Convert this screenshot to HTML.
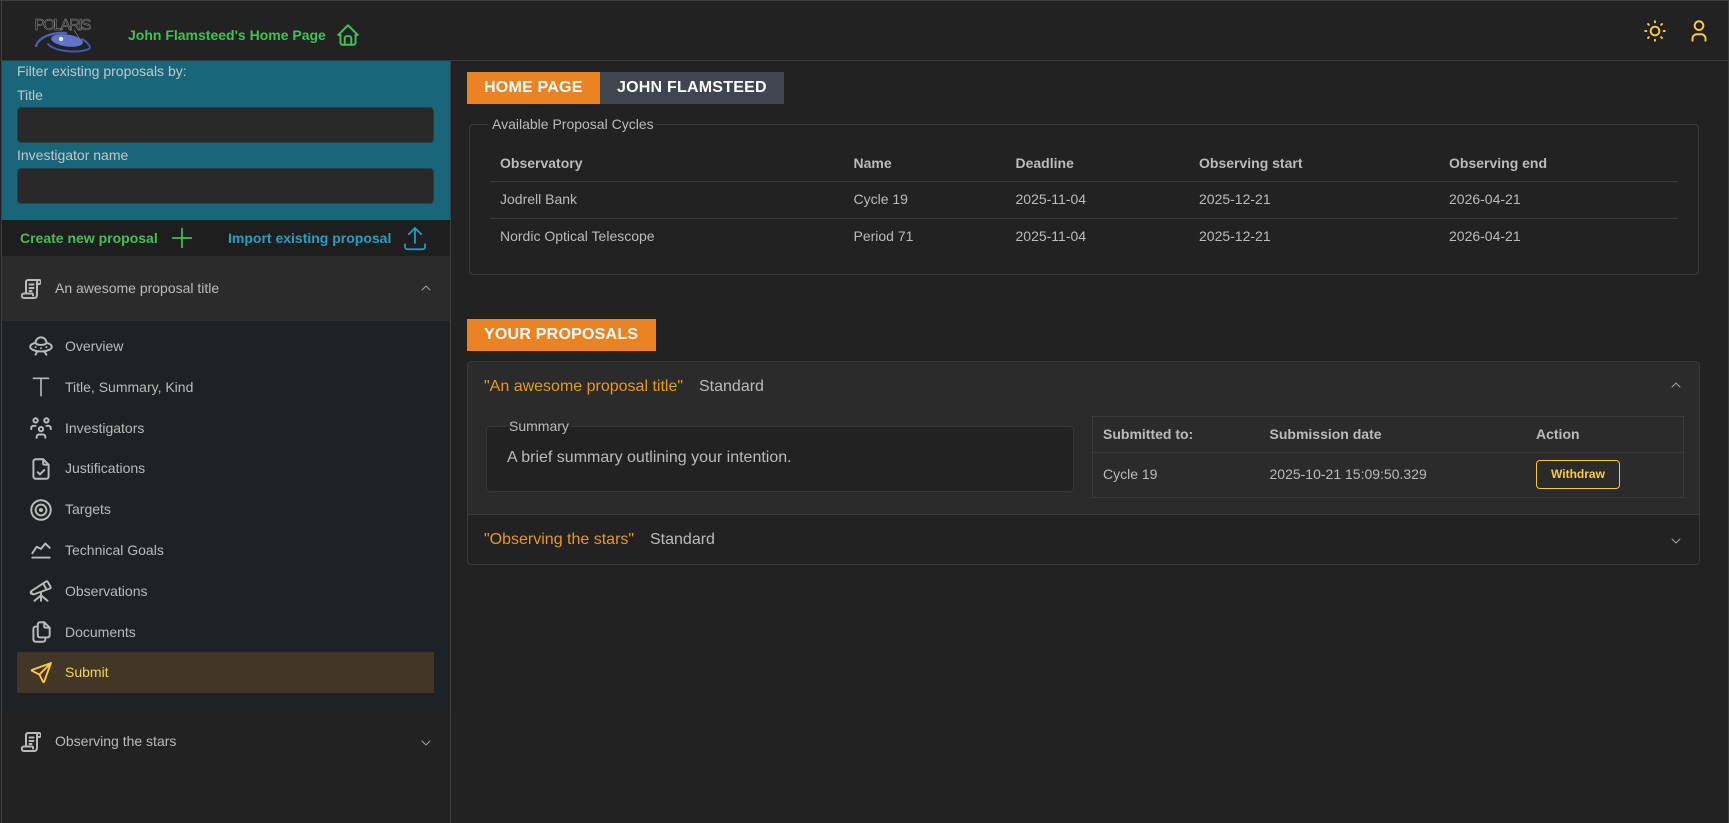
<!DOCTYPE html>
<html lang="en">
<head>
<meta charset="utf-8">
<title>Polaris</title>
<style>
*{box-sizing:border-box}
html,body{margin:0;padding:0;width:1729px;height:823px;overflow:hidden;background:#222;font-family:"Liberation Sans",Arial,sans-serif;color:#bbb}
.a{position:absolute}
.t{position:absolute;white-space:nowrap;line-height:20px;font-size:14px;color:#bbb}
.b{font-weight:700}
svg.i{position:absolute;fill:none;stroke:currentColor;stroke-width:1.8;stroke-linecap:round;stroke-linejoin:round}
svg.c{stroke-width:.9;color:#a8a8a8}
.tab{position:absolute;height:32px;color:#fff;font-weight:700;font-size:16px;line-height:32px;letter-spacing:.22px;white-space:nowrap;padding-left:17px}
.ln{position:absolute;height:1px;background:#3a3a3a}
.fs{position:absolute;border:1px solid #383838;border-radius:4px}
.inp{position:absolute;left:17px;width:417px;height:36px;background:#292929;border:1px solid #24424c;border-radius:4px}
</style>
</head>
<body>
<div class="a" style="left:0;top:0;width:1729px;height:1px;background:#3e3e3e"></div>
<div class="a" style="left:1px;top:0;width:1px;height:823px;background:#3e3e3e"></div>
<div class="a" style="left:1728px;top:0;width:1px;height:823px;background:#3e3e3e"></div>
<div class="a" style="left:0;top:60px;width:1729px;height:1px;background:#3a3a3a"></div>
<div class="a" style="left:450px;top:61px;width:1px;height:762px;background:#3e3e3e"></div>

<!-- logo -->
<svg class="a" style="left:30px;top:10px" width="70" height="48" viewBox="0 0 70 48">
<text x="4.500" y="20" font-family="Liberation Sans,sans-serif" font-size="15.500" fill="none" stroke="#8e8e8e" stroke-width=".5" textLength="57" lengthAdjust="spacing">POLARIS</text>
<path d="M44 20l7 11" stroke="#777" stroke-width=".7" fill="none"/>
<ellipse cx="37" cy="30.500" rx="16" ry="6" fill="#5f74c8" transform="rotate(8 37 30.500)"/>
<path d="M6 36C9 27 22 22 36 23" fill="none" stroke="#4f63b4" stroke-width="2.200" stroke-linecap="round"/>
<path d="M18 34C24 41 46 44 59 39 62 37 57 32 52 29" fill="none" stroke="#4558a6" stroke-width="2" stroke-linecap="round"/>
<circle cx="31" cy="29" r="2.200" fill="#e6ebff"/>
</svg>
<div class="t b" style="left:128px;top:25px;color:#40c057">John Flamsteed's Home Page</div>
<svg class="i" style="left:335px;top:22px;color:#40c057" width="26" height="26" viewBox="0 0 24 24"><path d="M5 12l-2 0l9 -9l9 9l-2 0"/><path d="M5 12v7a2 2 0 0 0 2 2h10a2 2 0 0 0 2 -2v-7"/><path d="M9 21v-6a2 2 0 0 1 2 -2h2a2 2 0 0 1 2 2v6"/></svg>
<svg class="i" style="left:1642px;top:18px;color:#fcc93f" width="26" height="26" viewBox="0 0 24 24"><path d="M12 12m-4 0a4 4 0 1 0 8 0a4 4 0 1 0 -8 0"/><path d="M3 12h1m8 -9v1m8 8h1m-9 8v1m-6.400 -15.400l.7 .7m12.100 -.7l-.7 .7m0 11.400l.7 .7m-12.100 -.7l-.7 .7"/></svg>
<svg class="i" style="left:1686px;top:18px;color:#fcc93f" width="26" height="26" viewBox="0 0 24 24"><path d="M8 7a4 4 0 1 0 8 0a4 4 0 0 0 -8 0"/><path d="M6 21v-2a4 4 0 0 1 4 -4h4a4 4 0 0 1 4 4v2"/></svg>

<!-- sidebar -->
<div class="a" style="left:2px;top:61px;width:448px;height:159px;background:#19667a"></div>
<div class="t" style="left:17px;top:61px;color:#c0c8cc">Filter existing proposals by:</div>
<div class="t" style="left:17px;top:85px;color:#c0c8cc">Title</div>
<div class="inp" style="top:107px"></div>
<div class="t" style="left:17px;top:145px;color:#c0c8cc">Investigator name</div>
<div class="inp" style="top:168px"></div>
<div class="a" style="left:2px;top:220px;width:448px;height:36px;background:#1e1e1e"></div>
<div class="t b" style="left:20px;top:228px;color:#40c057">Create new proposal</div>
<svg class="i" style="left:166px;top:222px;color:#40c057;stroke-width:1.300" width="32" height="32" viewBox="0 0 24 24"><path d="M12 5l0 14"/><path d="M5 12l14 0"/></svg>
<div class="t b" style="left:228px;top:228px;color:#22a0c4">Import existing proposal</div>
<svg class="i" style="left:400px;top:223px;color:#22a0c4;stroke-width:1.400" width="30" height="30" viewBox="0 0 24 24"><path d="M4 17v2a2 2 0 0 0 2 2h12a2 2 0 0 0 2 -2v-2"/><path d="M7 9l5 -5l5 5"/><path d="M12 4l0 12"/></svg>

<div class="a" style="left:2px;top:256px;width:448px;height:65px;background:#2b2b2b"></div>
<svg class="i" style="left:21px;top:279px;stroke-width:2" width="20" height="20" viewBox="0 0 20 20"><path d="M5 14V3a2 2 0 0 1 2-2h11"/><path d="M16 3a2 2 0 0 1 2-2 2 2 0 0 1 2 2c0 1-.8 2-2 2h-2"/><path d="M16 3v13c0 1.700-1 3-3 3H3a2.200 2.200 0 0 1 0-4.500h8c.6 0 1 .5 1 1v1"/><path d="M8.500 5.500h4M8.500 9h4M8.500 12h2"/></svg>
<div class="t" style="left:55px;top:278px">An awesome proposal title</div>
<svg class="i c" style="left:420px;top:282px" width="12" height="12" viewBox="0 0 12 12"><path d="M2 8l4-4 4 4"/></svg>

<div class="a" style="left:2px;top:321px;width:448px;height:388px;background:#1d2226"></div>
<div class="a" style="left:17px;top:652px;width:417px;height:41px;background:#423626"></div>

<svg class="i" style="left:28px;top:333px" width="26" height="26" viewBox="0 0 24 24"><path d="M16.950 9.010c3.020 .739 5.050 2.123 5.050 3.714c0 2.367 -4.480 4.276 -10 4.276s-10 -1.909 -10 -4.276c0 -1.590 2.040 -2.985 5.070 -3.724"/><path d="M7 9c0 1.105 2.239 2 5 2s5 -.895 5 -2v-.035c0 -2.742 -2.239 -4.965 -5 -4.965s-5 2.223 -5 4.965v.035"/><path d="M15 17l2 3"/><path d="M8.500 17l-1.500 3"/><path d="M12 14h.01"/><path d="M7 13h.01"/><path d="M17 13h.01"/></svg>
<div class="t" style="left:65px;top:336px">Overview</div>
<svg class="i" style="left:28px;top:374px;stroke-width:1.500" width="26" height="26" viewBox="0 0 24 24"><path d="M5 4l14 0"/><path d="M12 4l0 16"/></svg>
<div class="t" style="left:65px;top:377px">Title, Summary, Kind</div>
<svg class="i" style="left:28px;top:415px" width="26" height="26" viewBox="0 0 24 24"><path d="M10 13a2 2 0 1 0 4 0a2 2 0 0 0 -4 0"/><path d="M8 21v-1a2 2 0 0 1 2 -2h4a2 2 0 0 1 2 2v1"/><path d="M15 5a2 2 0 1 0 4 0a2 2 0 0 0 -4 0"/><path d="M17 10h2a2 2 0 0 1 2 2v1"/><path d="M5 5a2 2 0 1 0 4 0a2 2 0 0 0 -4 0"/><path d="M3 13v-1a2 2 0 0 1 2 -2h2"/></svg>
<div class="t" style="left:65px;top:418px">Investigators</div>
<svg class="i" style="left:28px;top:456px" width="26" height="26" viewBox="0 0 24 24"><path d="M14 3v4a1 1 0 0 0 1 1h4"/><path d="M17 21h-10a2 2 0 0 1 -2 -2v-14a2 2 0 0 1 2 -2h7l5 5v11a2 2 0 0 1 -2 2z"/><path d="M9 15l2 2l4 -4"/></svg>
<div class="t" style="left:65px;top:458px">Justifications</div>
<svg class="i" style="left:28px;top:497px" width="26" height="26" viewBox="0 0 24 24"><circle cx="12" cy="12" r="1"/><circle cx="12" cy="12" r="5"/><circle cx="12" cy="12" r="9"/></svg>
<div class="t" style="left:65px;top:499px">Targets</div>
<svg class="i" style="left:28px;top:537px" width="26" height="26" viewBox="0 0 24 24"><path d="M4 19l16 0"/><path d="M4 15l4 -6l4 2l4 -5l4 4"/></svg>
<div class="t" style="left:65px;top:540px">Technical Goals</div>
<svg class="i" style="left:28px;top:578px" width="26" height="26" viewBox="0 0 24 24"><path d="M6 21l6 -5l6 5"/><path d="M12 13v8"/><path d="M3.294 13.678l.166 .281c.52 .88 1.624 1.265 2.605 .91l14.242 -5.165a1.023 1.023 0 0 0 .565 -1.456l-2.620 -4.705a1.024 1.024 0 0 0 -1.462 -.394l-13.397 8.719c-.92 .6 -1.096 1.595 -.492 2.610z"/><path d="M14 5l3 5.500"/></svg>
<div class="t" style="left:65px;top:581px">Observations</div>
<svg class="i" style="left:28px;top:619px" width="26" height="26" viewBox="0 0 24 24"><path d="M15 3v4a1 1 0 0 0 1 1h4"/><path d="M18 17h-7a2 2 0 0 1 -2 -2v-10a2 2 0 0 1 2 -2h4l5 5v7a2 2 0 0 1 -2 2z"/><path d="M16 17v2a2 2 0 0 1 -2 2h-7a2 2 0 0 1 -2 -2v-10a2 2 0 0 1 2 -2h2"/></svg>
<div class="t" style="left:65px;top:622px">Documents</div>
<svg class="i" style="left:29px;top:660px;color:#fcc93f" width="25" height="25" viewBox="0 0 24 24"><path d="M10 14l11 -11"/><path d="M21 3l-6.500 18a.55 .55 0 0 1 -1 0l-3.500 -7l-7 -3.500a.55 .55 0 0 1 0 -1l18 -6.500"/></svg>
<div class="t" style="left:65px;top:662px;color:#fcd34d">Submit</div>

<svg class="i" style="left:21px;top:732px;stroke-width:2" width="20" height="20" viewBox="0 0 20 20"><path d="M5 14V3a2 2 0 0 1 2-2h11"/><path d="M16 3a2 2 0 0 1 2-2 2 2 0 0 1 2 2c0 1-.8 2-2 2h-2"/><path d="M16 3v13c0 1.700-1 3-3 3H3a2.200 2.200 0 0 1 0-4.500h8c.6 0 1 .5 1 1v1"/><path d="M8.500 5.500h4M8.500 9h4M8.500 12h2"/></svg>
<div class="t" style="left:55px;top:731px">Observing the stars</div>
<svg class="i c" style="left:420px;top:737px" width="12" height="12" viewBox="0 0 12 12"><path d="M2 4l4 4 4-4"/></svg>

<!-- main -->
<div class="a" style="left:467px;top:72px;width:133px;height:32px;background:#ec8323"></div>
<div class="tab" style="left:467px;top:72px">HOME PAGE</div>
<div class="a" style="left:600px;top:72px;width:184px;height:32px;background:#3f4650"></div>
<div class="tab" style="left:600px;top:72px">JOHN FLAMSTEED</div>

<div class="fs" style="left:469px;top:124px;width:1230px;height:151px"></div>
<div class="a" style="left:488px;top:120px;width:168px;height:10px;background:#222"></div>
<div class="t" style="left:492px;top:114px">Available Proposal Cycles</div>

<div class="t b" style="left:500px;top:153px">Observatory</div>
<div class="t b" style="left:853.500px;top:153px">Name</div>
<div class="t b" style="left:1015.500px;top:153px">Deadline</div>
<div class="t b" style="left:1199px;top:153px">Observing start</div>
<div class="t b" style="left:1449px;top:153px">Observing end</div>
<div class="ln" style="left:490px;top:181px;width:1188px"></div>
<div class="t" style="left:500px;top:189px">Jodrell Bank</div>
<div class="t" style="left:853.500px;top:189px">Cycle 19</div>
<div class="t" style="left:1015.500px;top:189px">2025-11-04</div>
<div class="t" style="left:1199px;top:189px">2025-12-21</div>
<div class="t" style="left:1449px;top:189px">2026-04-21</div>
<div class="ln" style="left:490px;top:218px;width:1188px"></div>
<div class="t" style="left:500px;top:226px">Nordic Optical Telescope</div>
<div class="t" style="left:853.500px;top:226px">Period 71</div>
<div class="t" style="left:1015.500px;top:226px">2025-11-04</div>
<div class="t" style="left:1199px;top:226px">2025-12-21</div>
<div class="t" style="left:1449px;top:226px">2026-04-21</div>

<div class="a" style="left:467px;top:319px;width:189px;height:32px;background:#ec8323"></div>
<div class="tab" style="left:467px;top:319px">YOUR PROPOSALS</div>

<div class="a" style="left:467px;top:361px;width:1233px;height:204px;border:1px solid #383838;border-radius:4px;background:#222;overflow:hidden">
  <div class="a" style="left:0;top:0;width:1231px;height:153px;background:#2b2b2b;border-bottom:1px solid #3a3a3a"></div>
</div>
<div class="t" style="left:484px;top:377px;font-size:16px;color:#e8981f">"An awesome proposal title"</div>
<div class="t" style="left:699px;top:377px;font-size:16px">Standard</div>
<svg class="i c" style="left:1670px;top:379px" width="12" height="12" viewBox="0 0 12 12"><path d="M2 8l4-4 4 4"/></svg>

<div class="fs" style="left:486px;top:426px;width:588px;height:66px;background:#222"></div>
<div class="a" style="left:506px;top:422px;width:66px;height:5px;background:#2b2b2b"></div>
<div class="a" style="left:506px;top:427px;width:66px;height:4px;background:#222"></div>
<div class="t" style="left:509px;top:416px">Summary</div>
<div class="t" style="left:507px;top:448px;font-size:16px">A brief summary outlining your intention.</div>

<div class="a" style="left:1092px;top:416px;width:592px;height:82px;border:1px solid #3a3a3a"></div>
<div class="ln" style="left:1092px;top:452px;width:592px"></div>
<div class="t b" style="left:1103px;top:424px">Submitted to:</div>
<div class="t b" style="left:1269.500px;top:424px">Submission date</div>
<div class="t b" style="left:1536px;top:424px">Action</div>
<div class="t" style="left:1103px;top:464px">Cycle 19</div>
<div class="t" style="left:1269.500px;top:464px">2025-10-21 15:09:50.329</div>
<div class="a" style="left:1536px;top:460px;width:84px;height:29px;border:1px solid #fcc93f;border-radius:4px"></div>
<div class="t b" style="left:1536px;top:464px;width:84px;text-align:center;font-size:12px;color:#fcc93f">Withdraw</div>

<div class="t" style="left:484px;top:530px;font-size:16px;color:#e8981f">"Observing the stars"</div>
<div class="t" style="left:650px;top:530px;font-size:16px">Standard</div>
<svg class="i c" style="left:1670px;top:535px" width="12" height="12" viewBox="0 0 12 12"><path d="M2 4l4 4 4-4"/></svg>
</body>
</html>
